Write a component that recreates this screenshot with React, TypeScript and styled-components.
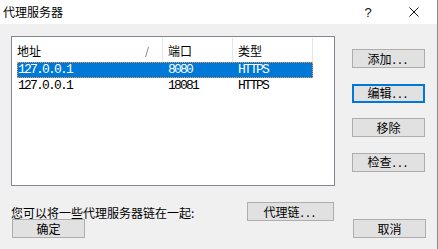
import React from 'react'
import styled, { createGlobalStyle } from 'styled-components'

const UI_FONT = `"Noto Sans CJK SC", "Noto Sans", sans-serif`
const LIST_FONT = `"Liberation Mono", "Noto Sans CJK SC", monospace`

interface Proxy {
  address: string
  port: string
  type: string
}

const proxies: Proxy[] = [
  { address: '127.0.0.1', port: '8080', type: 'HTTPS' },
  { address: '127.0.0.1', port: '18081', type: 'HTTPS' },
]

export default function App() {
  return (
    <>
      <GlobalStyle />
      <Window>
        <TitleBar>
          <Title>代理服务器</Title>
          <CaptionButton>?</CaptionButton>
          <CaptionButton>
            <svg width="10" height="10" viewBox="0 0 10 10">
              <path d="M0.5 0.5 L9.5 9.5 M9.5 0.5 L0.5 9.5" stroke="#111" strokeWidth="1" fill="none" />
            </svg>
          </CaptionButton>
        </TitleBar>
        <Body>
          <Main>
            <ListView>
              <Header>
                <HeaderCell $width={151}>
                  地址
                  <SortMark width="4" height="10" viewBox="0 0 4 10">
                    <path d="M3.5 0 L0.5 10" stroke="#8a8a8a" strokeWidth="1" fill="none" />
                  </SortMark>
                </HeaderCell>
                <HeaderCell $width={70}>端口</HeaderCell>
                <HeaderCell $width={80}>类型</HeaderCell>
              </Header>
              {proxies.map((p, i) => (
                <Row key={i} $selected={i === 0}>
                  <Cell $pad={1}>{p.address}</Cell>
                  <Cell $pad={6}>{p.port}</Cell>
                  <Cell $pad={6}>{p.type}</Cell>
                </Row>
              ))}
            </ListView>
            <SideButtons>
              <Button>添加<Dots>...</Dots></Button>
              <Button $default>编辑<Dots>...</Dots></Button>
              <Button>移除</Button>
              <Button>检查<Dots>...</Dots></Button>
            </SideButtons>
          </Main>
          <ChainRow>
            <Hint>您可以将一些代理服务器链在一起:</Hint>
            <Button $width={87}>代理链<Dots>...</Dots></Button>
          </ChainRow>
          <Footer>
            <Button>确定</Button>
            <Button>取消</Button>
          </Footer>
        </Body>
      </Window>
    </>
  )
}

const GlobalStyle = createGlobalStyle`
  html, body {
    margin: 0;
    padding: 0;
    background: #f0f0f0;
  }
  body {
    font-family: ${UI_FONT};
    font-size: 12px;
    color: #000;
  }
`

const Window = styled.div`
  width: 438px;
  height: 249px;
  box-sizing: border-box;
  background: #f0f0f0;
  border-right: 1px solid #8a8a8a;
  display: flex;
  flex-direction: column;
  overflow: hidden;
`

const TitleBar = styled.div`
  height: 24px;
  flex-shrink: 0;
  background: #fff;
  display: flex;
  align-items: center;
  padding-left: 3px;
`

const Title = styled.div`
  flex: 1;
  font-size: 12px;
  line-height: 24px;
  padding-bottom: 1px;
`

const CaptionButton = styled.div`
  width: 46px;
  height: 24px;
  display: flex;
  align-items: center;
  justify-content: center;
  font-family: "Liberation Sans", sans-serif;
  font-size: 13px;
  color: #111;
`

const Body = styled.div`
  padding: 12px 0 0 11px;
  display: flex;
  flex-direction: column;
`

const Main = styled.div`
  display: flex;
  align-items: flex-start;
`

const ListView = styled.div`
  width: 324px;
  height: 150px;
  box-sizing: border-box;
  border: 1px solid #828790;
  background: #fff;
`

const Header = styled.div`
  display: flex;
  height: 25px;
`

const HeaderCell = styled.div<{ $width: number }>`
  width: ${(p) => p.$width}px;
  box-sizing: border-box;
  border-right: 1px solid #e5e5e5;
  margin-top: 1px;
  padding-left: 5px;
  display: flex;
  align-items: center;
  font-family: ${UI_FONT};
  font-size: 12px;
  position: relative;
`

const SortMark = styled.svg`
  position: absolute;
  right: 13px;
  top: 9px;
`

const Row = styled.div<{ $selected?: boolean }>`
  display: grid;
  grid-template-columns: 145px 70px 81px;
  margin-left: 5px;
  width: 296px;
  height: 16px;
  box-sizing: border-box;
  align-items: center;
  font-family: ${LIST_FONT};
  font-size: 13px;
  letter-spacing: -1.8px;
  background: ${(p) => (p.$selected ? '#0078d7' : 'transparent')};
  color: ${(p) => (p.$selected ? '#fff' : '#000')};
  border: 1px dotted ${(p) => (p.$selected ? '#ff9a3c' : 'transparent')};
`

const Cell = styled.div<{ $pad: number }>`
  padding-left: ${(p) => p.$pad - 1}px;
  white-space: nowrap;
  line-height: 14px;
`

const SideButtons = styled.div`
  margin-left: 17px;
  padding-top: 13px;
  display: flex;
  flex-direction: column;
  gap: 15.5px;
`

const Button = styled.div<{ $width?: number; $default?: boolean }>`
  width: ${(p) => p.$width ?? 73}px;
  height: 19px;
  box-sizing: border-box;
  background: #e1e1e1;
  border: ${(p) => (p.$default ? '2px solid #0078d7' : '1px solid #adadad')};
  display: flex;
  align-items: center;
  justify-content: center;
  font-family: ${UI_FONT};
  font-size: 12px;
  line-height: 17px;
  padding-bottom: 1px;
`

const Dots = styled.span`
  letter-spacing: 2.3px;
  margin-left: 1px;
`

const ChainRow = styled.div`
  display: flex;
  align-items: center;
  margin-top: 16px;
`

const Hint = styled.div`
  width: 236px;
  font-size: 12px;
  line-height: 17px;
  padding-top: 1px;
`

const Footer = styled.div`
  display: flex;
  justify-content: space-between;
  margin-top: -2px;
  margin-left: 1px;
  width: 414px;
`
